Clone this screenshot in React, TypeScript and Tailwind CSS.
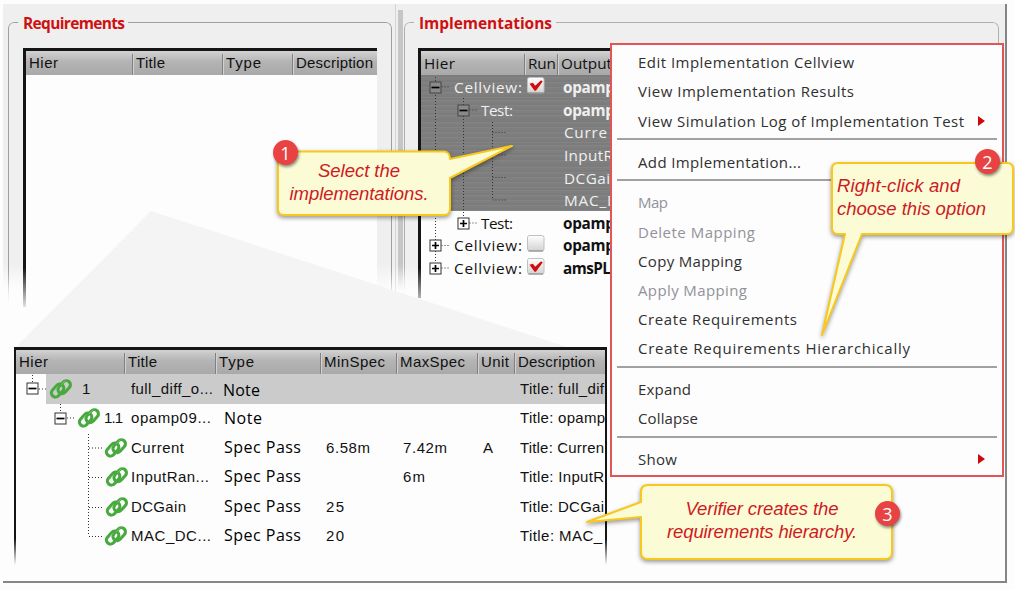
import { useLayoutEffect, useRef, useState, type ReactNode } from "react";

/** Text whose letter spacing is adjusted so the line fills a given width. */
function Fit({ w, children, className = "" }: { w: number; children: string; className?: string }) {
  const ref = useRef<HTMLSpanElement>(null);
  const [spacing, setSpacing] = useState(0);
  useLayoutEffect(() => {
    if (ref.current) {
      const natural = ref.current.getBoundingClientRect().width;
      setSpacing((w - natural) / Math.max(1, children.length - 1));
    }
  }, []);
  return (
    <span ref={ref} className={`inline-block shrink-0 whitespace-pre ${className}`} style={{ letterSpacing: spacing }}>
      {children}
    </span>
  );
}

const noto = "font-['Open_Sans','Noto_Sans',sans-serif]";
const arial = "font-['Liberation_Sans',Arial,sans-serif]";
const headBg = "bg-linear-to-b from-[#d2d2d2] via-[#b4b4b4] via-45% to-[#a9a9a9]";

function HeadCell({ text, w, first = false }: { text: string; w: number; first?: boolean }) {
  return (
    <div className={`flex items-center overflow-hidden ${first ? "pl-[3px]" : "relative pl-[4px]"}`}>
      {!first && <i className="absolute top-[3px] bottom-0 left-0 w-[2px] border-l border-[#808080] bg-[#d2d2d2]" />}
      <Fit w={w}>{text}</Fit>
    </div>
  );
}

function Expander({ x, y, plus = false, stroke = "#333", fill = "#fff" }: { x: number; y: number; plus?: boolean; stroke?: string; fill?: string }) {
  return (
    <g>
      <rect x={x - 5.5} y={y - 5.5} width="11" height="11" fill={fill} stroke={stroke} />
      <path d={plus ? `M${x - 3.5} ${y}h7M${x} ${y - 3.5}v7` : `M${x - 4} ${y}h8`} stroke="#000" strokeWidth="1.7" />
    </g>
  );
}

function LinkIcon() {
  return (
    <svg width="24" height="22" viewBox="0 0 24 22" className="shrink-0">
      <g fill="none" stroke="#48a93f" strokeWidth="3.1">
        <rect x="-7.3" y="-4.1" width="14.6" height="8.2" rx="4.1" transform="translate(8.6 12.6) rotate(-48)" />
        <rect x="-7.3" y="-4.1" width="14.6" height="8.2" rx="4.1" transform="translate(15.2 9.2) rotate(-48)" />
      </g>
      <path d="M4.4 13.6l4.4-5.2M12.2 6.8l3.8-4" fill="none" stroke="#8fd087" strokeWidth="0.7" />
    </svg>
  );
}

function Check({ on }: { on: boolean }) {
  return (
    <svg width="18" height="17" viewBox="0 0 18 17" className="-mt-px -ml-px">
      <defs>
        <linearGradient id="box" x1="0" y1="0" x2="0" y2="1">
          <stop offset="0" stopColor="#fff" />
          <stop offset="1" stopColor="#d2d2d2" />
        </linearGradient>
      </defs>
      <rect x="0.5" y="0.5" width="16.5" height="15.5" rx="2" fill="url(#box)" stroke="#c0c0c0" />
      <path d="M1.5 16h14.5" stroke="#858585" />
      {on && <path d="M2.5 6.8l3.4-1 2.3 3 5.9-5.6 1.6 1.3-6.8 9.2H7.6z" fill="#d00c0c" />}
    </svg>
  );
}

function Panel({ title, w, className, frame, children }: { title: string; w: number; className: string; frame: string; children: ReactNode }) {
  return (
    <section className={`relative h-[290px] pt-[7px] ${className}`}>
      <div className={`absolute top-[18px] right-0 left-0 rounded-t-[6px] border border-b-0 mask-b-from-90% ${frame}`} />
      <div className={`relative ml-[10px] flex h-[25px] w-fit items-center bg-[#efefef] pr-[4px] pl-[5px] text-[15.5px] leading-[25px] font-bold text-[#cf1010] ${noto}`}>
        <Fit w={w}>{title}</Fit>
      </div>
      {children}
    </section>
  );
}

type ImplRow = { indent: number; label?: string; lw?: number; box?: boolean; name: string; nw: number; selected: boolean };
const implRows: ImplRow[] = [
  { indent: 34, label: "Cellview:", lw: 68, box: true, name: "opamp", nw: 52, selected: true },
  { indent: 61, label: "Test:", lw: 32, name: "opamp", nw: 52, selected: true },
  { indent: 61, name: "Curre", nw: 43, selected: true },
  { indent: 61, name: "InputR", nw: 49, selected: true },
  { indent: 61, name: "DCGai", nw: 46, selected: true },
  { indent: 61, name: "MAC_D", nw: 54, selected: true },
  { indent: 61, label: "Test:", lw: 32, name: "opamp", nw: 52, selected: false },
  { indent: 34, label: "Cellview:", lw: 68, box: false, name: "opamp", nw: 52, selected: false },
  { indent: 34, label: "Cellview:", lw: 68, box: true, name: "amsPL", nw: 48, selected: false },
];

type ReqRow = {
  pad: string; id?: string; idw?: number; title: string; tw: number; type: string; yw: number;
  min?: string; minw?: number; max?: string; maxw?: number; unit?: string; desc: string; dw: number;
};
const reqRows: ReqRow[] = [
  { pad: "pl-[33px]", id: "1", idw: 7, title: "full_diff_o...", tw: 82, type: "Note", yw: 37, desc: "Title: full_dif", dw: 84 },
  { pad: "pl-[61px]", id: "1.1", idw: 19, title: "opamp09...", tw: 80, type: "Note", yw: 38, desc: "Title: opamp", dw: 85 },
  { pad: "pl-[88px]", title: "Current", tw: 53, type: "Spec Pass", yw: 77, min: "6.58m", minw: 44, max: "7.42m", maxw: 44, unit: "A", desc: "Title: Curren", dw: 84 },
  { pad: "pl-[89px]", title: "InputRan...", tw: 78, type: "Spec Pass", yw: 77, max: "6m", maxw: 22, desc: "Title: InputR", dw: 84 },
  { pad: "pl-[89px]", title: "DCGain", tw: 55, type: "Spec Pass", yw: 77, min: "25", minw: 18, desc: "Title: DCGai", dw: 84 },
  { pad: "pl-[88px]", title: "MAC_DC...", tw: 80, type: "Spec Pass", yw: 77, min: "20", minw: 18, desc: "Title: MAC_", dw: 82 },
];

type Item = { text: string; w: number; dim?: boolean; arrow?: boolean };
const menuGroups: Item[][] = [
  [
    { text: "Edit Implementation Cellview", w: 216 },
    { text: "View Implementation Results", w: 216 },
    { text: "View Simulation Log of Implementation Test", w: 326, arrow: true },
  ],
  [{ text: "Add Implementation...", w: 163 }],
  [
    { text: "Map", w: 30, dim: true },
    { text: "Delete Mapping", w: 117, dim: true },
    { text: "Copy Mapping", w: 104 },
    { text: "Apply Mapping", w: 109, dim: true },
    { text: "Create Requirements", w: 159 },
    { text: "Create Requirements Hierarchically", w: 272 },
  ],
  [
    { text: "Expand", w: 53 },
    { text: "Collapse", w: 60 },
  ],
  [{ text: "Show", w: 39, arrow: true }],
];

function Badge({ n, className }: { n: number; className: string }) {
  return (
    <div className={`absolute flex size-[25px] items-center justify-center rounded-full bg-[#e84242] text-[18px] leading-none text-white shadow-[1px_2px_3px_rgba(0,0,0,0.45)] ${noto} ${className}`}>
      {n}
    </div>
  );
}

function Bubble({ d, className, w, h }: { d: string; className: string; w: number; h: number }) {
  return (
    <svg width={w} height={h} viewBox={`0 0 ${w} ${h}`} className={`absolute drop-shadow-[0px_2px_2px_rgba(0,0,0,0.4)] ${className}`}>
      <path d={d} fill="#fbfcd6" stroke="#f8c81c" strokeWidth="2" strokeLinejoin="round" />
    </svg>
  );
}

export default function App() {
  return (
    <main className="relative h-[590px] w-[1015px] overflow-hidden bg-[#fdfdfd] text-[#111]">
      <div className="ml-[3px] h-[579px] w-[1004px] translate-y-[4px] border-r-[2px] border-b-[2px] border-[#858585] bg-[#fdfdfd]">
        <div className="flex h-[288px] bg-linear-to-b from-[#efefef] from-90% to-[#fdfdfd]">
          <Panel title="Requirements" w={102} className="ml-[5px] w-[384px]" frame="-bottom-[12px] border-[#9c9f9c]">
            <div className={`relative mt-[12px] ml-[15px] h-[259px] w-[354px] border-t-[3px] border-l-[3px] border-[#151515] bg-[#fdfdfd] text-[15px] ${arial}`}>
              <div className={`grid h-[24px] grid-cols-[106px_90px_70px_85px] ${headBg}`}>
                <HeadCell text="Hier" w={29} first />
                <HeadCell text="Title" w={29} />
                <HeadCell text="Type" w={35} />
                <HeadCell text="Description" w={77} />
              </div>
            </div>
          </Panel>

          <div className="ml-[3px] h-[288px] w-[2px] border-l border-[#dcd2d6]" />
          <div className="mt-[6px] ml-px h-[282px] w-[5px] bg-[#c6c6c6] mask-b-from-90%" />

          <Panel title="Implementations" w={133} className="ml-px w-[595px]" frame="bottom-0 border-[#aeb0ae]">
            <div className={`relative mt-[12px] ml-[14px] h-[250px] w-[580px] border-t-[3px] border-l-[3px] border-[#151515] bg-[#fdfdfd] text-[15.3px] ${noto}`}>
              <div className={`grid h-[24px] grid-cols-[103px_33px_441px] ${headBg}`}>
                <HeadCell text="Hier" w={31} first />
                <HeadCell text="Run" w={28} />
                <HeadCell text="Output" w={51} />
              </div>
              {implRows.map((r, i) => (
                <div
                  key={i}
                  className={`grid h-[22.6px] grid-cols-[107px_34px_436px] items-center leading-[22px] ${r.selected ? "bg-[#808080] bg-[repeating-linear-gradient(to_bottom,#7c7c7c_0px,#7c7c7c_2px,#848484_2px,#848484_3px,#7f7f7f_3px,#7f7f7f_5px)] text-[#f0f0f0]" : "text-[#111]"}`}
                >
                  <div className={r.indent === 34 ? "pl-[33px]" : "pl-[60px]"}>{r.label && <Fit w={r.lw!} className="translate-y-[0.5px]">{r.label}</Fit>}</div>
                  <div>{r.box !== undefined && <Check on={r.box} />}</div>
                  <div className={r.label ? "pl-px font-bold" : "pl-[2px] font-normal"}>
                    <Fit w={r.nw} className="translate-y-[0.5px]">{r.name}</Fit>
                  </div>
                </div>
              ))}
              <svg className="absolute top-0 left-0" width="100" height="250" viewBox="421 51 100 250">
                <g stroke="#333" strokeDasharray="1 2" fill="none">
                  <path d="M435.5 77v191M435.5 87h14M435.5 245.5h14M435.5 268h14M463.5 98v125M463.5 110h14M463.5 223h14M492.5 122v78M492.5 132.5h14M492.5 155h14M492.5 177.5h14M492.5 200h14" />
                </g>
                <Expander x={435.5} y={87.5} stroke="#444" fill="#8a8a8a" />
                <Expander x={463.5} y={110.5} stroke="#444" fill="#8a8a8a" />
                <Expander x={463.5} y={223.5} plus />
                <Expander x={435.5} y={245.5} plus />
                <Expander x={435.5} y={268.5} plus />
              </svg>
            </div>
          </Panel>
        </div>
      </div>

      <svg className="absolute top-0 left-0" width="620" height="350" viewBox="0 0 620 350">
        <defs>
          <linearGradient id="fade" x1="0" y1="0" x2="0" y2="1">
            <stop offset="0" stopColor="#fdfdfd" stopOpacity="0" />
            <stop offset="1" stopColor="#fdfdfd" />
          </linearGradient>
        </defs>
        <path d="M0 268h30v44H0zM388 268h34v32h-34z" fill="url(#fade)" />
        <path d="M0 309h30v20H0z" fill="#fdfdfd" />
        <path d="M151 211L15 348H570z" fill="#f4f4f4" />
      </svg>

      <section className={`absolute top-[347px] left-[14px] h-[218px] w-[593px] text-[15px] ${arial}`}>
        <div className="absolute inset-0 border-x-[2px] border-t-[3px] border-[#151515] bg-[#fdfdfd] mask-b-from-88%" />
        <div className="relative mx-[2px] overflow-hidden pt-[3px]">
          <div className={`grid h-[24px] grid-cols-[108px_91px_105px_76px_81px_37px_91px] ${headBg}`}>
            <HeadCell text="Hier" w={29} first />
            <HeadCell text="Title" w={29} />
            <HeadCell text="Type" w={35} />
            <HeadCell text="MinSpec" w={61} />
            <HeadCell text="MaxSpec" w={65} />
            <HeadCell text="Unit" w={28} />
            <HeadCell text="Description" w={77} />
          </div>
          {reqRows.map((r, i) => (
            <div
              key={i}
              className={`grid h-[29.5px] grid-cols-[115px_91px_104px_77px_80px_36px_86px] items-center ${i === 0 ? "bg-linear-to-r from-[#fdfdfd] from-[30px] to-[#cbcbcb] to-[30px]" : ""}`}
            >
              <div className={`flex items-center ${r.pad}`}>
                <LinkIcon />
                {r.id && <Fit w={r.idw!} className={i === 0 ? "ml-[9px]" : "ml-[3px]"}>{r.id}</Fit>}
              </div>
              <Fit w={r.tw} className="justify-self-start">{r.title}</Fit>
              <Fit w={r.yw} className={`justify-self-start text-[16px] font-medium text-black ${i === 0 ? "ml-px translate-y-px" : i === 1 ? "ml-[2px]" : "ml-[2px] -translate-y-px"} ${noto}`}>{r.type}</Fit>
              <div>{r.min && <Fit w={r.minw!}>{r.min}</Fit>}</div>
              <div>{r.max && <Fit w={r.maxw!}>{r.max}</Fit>}</div>
              <div>{r.unit}</div>
              <div className="pl-px"><Fit w={r.dw}>{r.desc}</Fit></div>
            </div>
          ))}
        </div>
        <svg className="absolute top-0 left-0" width="110" height="210" viewBox="14 347 110 210">
          <path d="M32.5 375v8M39 389h8M60.5 404v8M67 418h7M88.5 434v102M89 448h14M89 477.5h14M89 507.5h14M89 536.5h14" stroke="#333" strokeDasharray="1 2" fill="none" />
          <Expander x={32.5} y={388.5} />
          <Expander x={60.5} y={418.5} />
        </svg>
      </section>

      <nav className={`absolute top-[43px] left-[610px] h-[434px] w-[394px] border-[2px] border-[#e35555] bg-[#fdfdfd] px-[5px] pt-[3px] text-[15px] text-[#303030] ${noto}`}>
        {menuGroups.map((g, gi) => (
          <div key={gi}>
            {gi > 0 && <hr className="mt-[2.7px] mb-[7.1px] h-[2px] border-0 bg-[#a2a2a2]" />}
            {g.map((it) => (
              <div key={it.text} className={`flex h-[29.15px] items-center justify-between pr-[12px] pl-[21px] font-medium ${it.dim ? "text-[#92929a]" : ""}`}>
                <Fit w={it.w}>{it.text}</Fit>
                {it.arrow && (
                  <svg width="7" height="10" viewBox="0 0 7 10">
                    <path d="M0 0l7 5-7 5z" fill="#cc0a0a" />
                  </svg>
                )}
              </div>
            ))}
          </div>
        ))}
      </nav>

      <Bubble w={250} h={80} className="top-[145px] left-[270px]" d="M14 6.5H174Q180 7 180 14L242 0.8 180 33V64Q180 70 174 70H14Q8 70 8 64V13Q8 7 14 6.5Z" />
      <div className={`absolute top-[159px] left-[279px] flex w-[160px] flex-col items-center text-[18.5px] leading-[23px] text-[#cf1a24] italic ${arial}`}>
        <Fit w={82}>Select the</Fit>
        <Fit w={139}>implementations.</Fit>
      </div>
      <Badge n={1} className="top-[140px] left-[273px]" />

      <Bubble w={205} h={185} className="top-[155px] left-[810px]" d="M28 8H197Q203 8 203 14V73Q203 79 197 79H52L12 180 35 79H28Q22 79 22 73V14Q22 8 28 8Z" />
      <div className={`absolute top-[174px] left-[837px] flex flex-col items-start text-[18.5px] leading-[23px] text-[#cf1a24] italic ${arial}`}>
        <Fit w={123}>Right-click and</Fit>
        <Fit w={149}>choose this option</Fit>
      </div>
      <Badge n={2} className="top-[149px] left-[975px]" />

      <Bubble w={320} h={90} className="top-[478px] left-[580px]" d="M68 7H305Q312 7 312 14V74Q312 81 305 81H68Q61 81 61 74V39L7 44 61 24V14Q61 7 68 7Z" />
      <div className={`absolute top-[497px] left-[662px] flex w-[200px] flex-col items-center text-[18.5px] leading-[23px] text-[#cf1a24] italic ${arial}`}>
        <Fit w={153}>Verifier creates the</Fit>
        <Fit w={190}>requirements hierarchy.</Fit>
      </div>
      <Badge n={3} className="top-[501px] left-[875px]" />
    </main>
  );
}
